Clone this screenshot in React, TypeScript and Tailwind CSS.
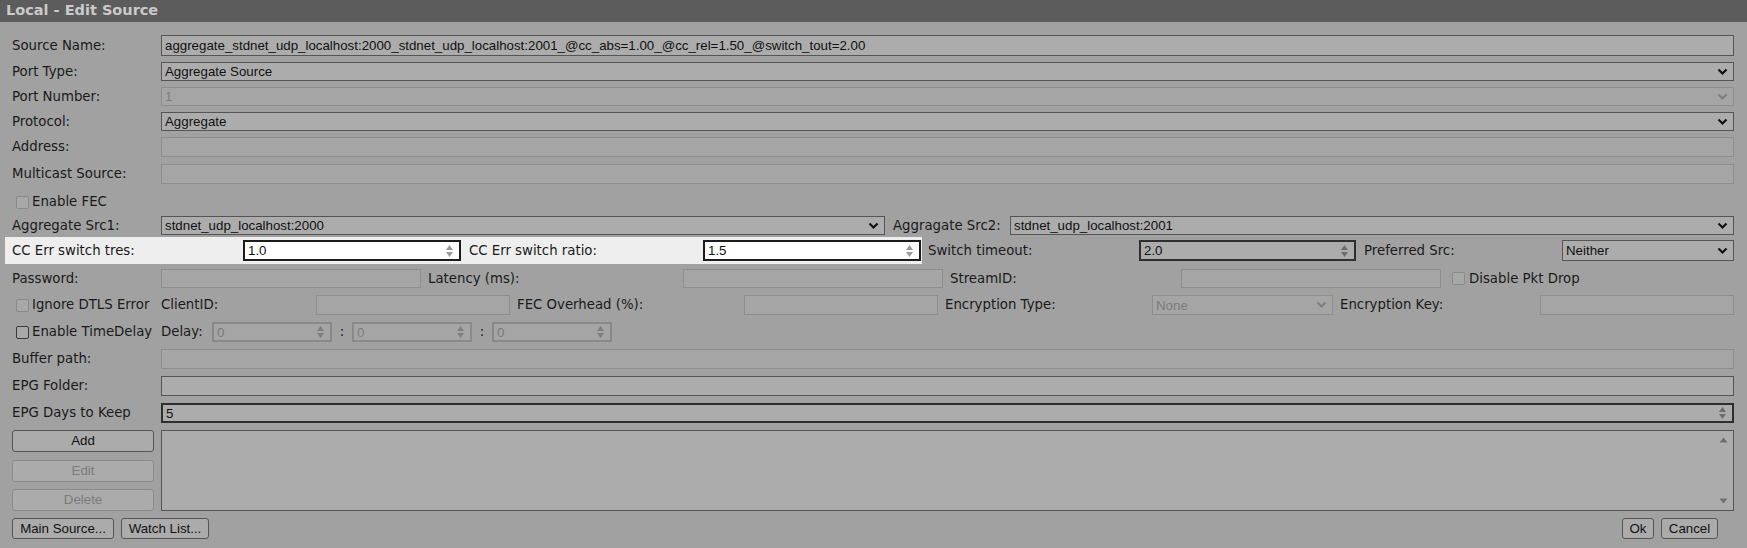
import * as React from "react"

const labelFont = "font-['DejaVu_Sans',Verdana,sans-serif] text-[13.3px] text-[#1a1a1a] whitespace-nowrap"
const fieldFont = "font-['Liberation_Sans',Arial,sans-serif] text-[13.3px]"

type Tone = "normal" | "disabled" | "bright" | "dark" | "dim"

const toneClass: Record<Tone, string> = {
  normal: "border border-[#555555] bg-[#acacac] text-[#111111]",
  disabled: "border border-[#8e8e8e] bg-[#a5a5a5] text-[#7c7c7c]",
  bright: "border-2 border-[#1c1c1c] bg-white text-[#111111]",
  dark: "border-2 border-[#2e2e2e] bg-[#acacac] text-[#111111]",
  dim: "border-2 border-[#8a8a8a] bg-[#a5a5a5] text-[#7c7c7c]",
}

function Spinner({ color }: { color: string }) {
  return (
    <svg width="9" height="16" viewBox="0 0 9 16" className="shrink-0">
      <path d="M1 7 L4.5 2 L8 7 Z" fill={color} />
      <path d="M1 9 L4.5 14 L8 9 Z" fill={color} />
    </svg>
  )
}

function Chevron({ color }: { color: string }) {
  return (
    <svg width="11" height="8" viewBox="0 0 11 8" className="shrink-0">
      <path d="M1.5 1.5 L5.5 5.5 L9.5 1.5" fill="none" stroke={color} strokeWidth="2.2" />
    </svg>
  )
}

function Field({
  value = "",
  tone = "normal",
  kind = "text",
  className = "",
}: {
  value?: string
  tone?: Tone
  kind?: "text" | "select" | "spin"
  className?: string
}) {
  const arrow = tone === "disabled" || tone === "dim" ? "#7f7f7f" : tone === "bright" ? "#9b9b9b" : "#6c6c6c"
  return (
    <div className={`flex h-full items-center pl-[3px] pr-[5px] ${fieldFont} ${toneClass[tone]} ${className}`}>
      <span className="flex-1 truncate leading-[17px]">{value}</span>
      {kind === "select" && <Chevron color={tone === "disabled" ? "#7f7f7f" : "#111111"} />}
      {kind === "spin" && <Spinner color={arrow} />}
    </div>
  )
}

function Check({ dark = false }: { dark?: boolean }) {
  return (
    <span
      className={`inline-block h-[13px] w-[13px] shrink-0 rounded-[2px] border bg-[#a8a8a8] ${
        dark ? "border-[#3a3a3a]" : "border-[#8a8a8a]"
      }`}
    />
  )
}

function Button({ children, disabled = false, className = "" }: { children: React.ReactNode; disabled?: boolean; className?: string }) {
  return (
    <div
      className={`flex items-center justify-center rounded-[3px] border bg-[#ababab] ${fieldFont} ${
        disabled ? "border-[#8c8c8c] text-[#7b7b7b]" : "border-[#555555] text-[#111111]"
      } ${className}`}
    >
      {children}
    </div>
  )
}

export default function App() {
  return (
    <div className="h-[548px] w-[1747px] overflow-hidden bg-[#a1a1a1]">
      {/* title */}
      <div className="flex h-[22px] items-center bg-[#5c5c5c] pl-[6px] font-['DejaVu_Sans',Verdana,sans-serif] text-[14.5px] font-bold text-[#cacaca]">
        Local - Edit Source
      </div>

      <div className="flex flex-col pl-[12px] pr-[13px]">
        <div className="mt-[13px] flex h-[21px] items-center">
          <span className={`w-[149px] ${labelFont}`}>Source Name:</span>
          <Field
            className="flex-1"
            value="aggregate_stdnet_udp_localhost:2000_stdnet_udp_localhost:2001_@cc_abs=1.00_@cc_rel=1.50_@switch_tout=2.00"
          />
        </div>

        <div className="mt-[6px] flex h-[19px] items-center">
          <span className={`w-[149px] ${labelFont}`}>Port Type:</span>
          <Field className="flex-1" kind="select" value="Aggregate Source" />
        </div>

        <div className="mt-[6px] flex h-[19px] items-center">
          <span className={`w-[149px] ${labelFont}`}>Port Number:</span>
          <Field className="flex-1" kind="select" tone="disabled" value="1" />
        </div>

        <div className="mt-[6px] flex h-[19px] items-center">
          <span className={`w-[149px] ${labelFont}`}>Protocol:</span>
          <Field className="flex-1" kind="select" value="Aggregate" />
        </div>

        <div className="mt-[6px] flex h-[20px] items-center">
          <span className={`w-[149px] ${labelFont}`}>Address:</span>
          <Field className="flex-1" tone="disabled" />
        </div>

        <div className="mt-[7px] flex h-[20px] items-center">
          <span className={`w-[149px] ${labelFont}`}>Multicast Source:</span>
          <Field className="flex-1" tone="disabled" />
        </div>

        <div className="mt-[9px] flex h-[18px] items-center pl-[4px]">
          <Check />
          <span className={`ml-[3px] ${labelFont}`}>Enable FEC</span>
        </div>

        <div className="mt-[5px] flex h-[19px] items-center">
          <span className={`w-[149px] ${labelFont}`}>Aggregate Src1:</span>
          <Field className="w-[724px]" kind="select" value="stdnet_udp_localhost:2000" />
          <span className={`ml-[8px] w-[117px] ${labelFont}`}>Aggragate Src2:</span>
          <Field className="flex-1" kind="select" value="stdnet_udp_localhost:2001" />
        </div>

        {/* highlighted CC row */}
        <div className="mt-[2px] flex h-[27px] items-center">
          <div className="-ml-[7px] flex h-full w-[917px] items-center bg-[#eeeeee] pl-[7px]">
            <span className={`w-[231px] ${labelFont}`}>CC Err switch tres:</span>
            <div className="h-[21px] w-[218px]">
              <Field tone="bright" kind="spin" value="1.0" />
            </div>
            <span className={`ml-[8px] w-[234px] ${labelFont}`}>CC Err switch ratio:</span>
            <div className="h-[21px] w-[218px]">
              <Field tone="bright" kind="spin" value="1.5" />
            </div>
          </div>
          <span className={`ml-[6px] w-[211px] ${labelFont}`}>Switch timeout:</span>
          <div className="h-[21px] w-[217px]">
            <Field tone="dark" kind="spin" value="2.0" />
          </div>
          <span className={`ml-[8px] w-[198px] ${labelFont}`}>Preferred Src:</span>
          <div className="h-[21px] flex-1">
            <Field kind="select" value="Neither" />
          </div>
        </div>

        <div className="mt-[5px] flex h-[19px] items-center">
          <span className={`w-[149px] ${labelFont}`}>Password:</span>
          <Field className="w-[260px]" tone="disabled" />
          <span className={`ml-[7px] w-[255px] ${labelFont}`}>Latency (ms):</span>
          <Field className="w-[260px]" tone="disabled" />
          <span className={`ml-[7px] w-[231px] ${labelFont}`}>StreamID:</span>
          <Field className="w-[260px]" tone="disabled" />
          <span className="ml-[11px]">
            <Check />
          </span>
          <span className={`ml-[4px] ${labelFont}`}>Disable Pkt Drop</span>
        </div>

        <div className="mt-[7px] flex h-[20px] items-center">
          <div className="flex w-[149px] items-center pl-[4px]">
            <Check />
            <span className={`ml-[3px] ${labelFont}`}>Ignore DTLS Error</span>
          </div>
          <span className={`w-[155px] ${labelFont}`}>ClientID:</span>
          <Field className="w-[194px]" tone="disabled" />
          <span className={`ml-[7px] w-[227px] ${labelFont}`}>FEC Overhead (%):</span>
          <Field className="w-[194px]" tone="disabled" />
          <span className={`ml-[7px] w-[207px] ${labelFont}`}>Encryption Type:</span>
          <Field className="w-[181px]" tone="disabled" kind="select" value="None" />
          <span className={`ml-[7px] w-[200px] ${labelFont}`}>Encryption Key:</span>
          <Field className="flex-1" tone="disabled" />
        </div>

        <div className="mt-[7px] flex h-[20px] items-center">
          <div className="flex w-[149px] items-center pl-[4px]">
            <Check dark />
            <span className={`ml-[3px] ${labelFont}`}>Enable TimeDelay</span>
          </div>
          <span className={`w-[51px] ${labelFont}`}>Delay:</span>
          <Field className="w-[120px]" tone="dim" kind="spin" value="0" />
          <span className={`w-[20px] text-center ${labelFont}`}>:</span>
          <Field className="w-[120px]" tone="dim" kind="spin" value="0" />
          <span className={`w-[20px] text-center ${labelFont}`}>:</span>
          <Field className="w-[120px]" tone="dim" kind="spin" value="0" />
        </div>

        <div className="mt-[7px] flex h-[20px] items-center">
          <span className={`w-[149px] ${labelFont}`}>Buffer path:</span>
          <Field className="flex-1" tone="disabled" />
        </div>

        <div className="mt-[7px] flex h-[20px] items-center">
          <span className={`w-[149px] ${labelFont}`}>EPG Folder:</span>
          <Field className="flex-1" />
        </div>

        <div className="mt-[7px] flex h-[20px] items-center">
          <span className={`w-[149px] ${labelFont}`}>EPG Days to Keep</span>
          <Field className="flex-1" tone="dark" kind="spin" value="5" />
        </div>

        <div className="mt-[7px] flex h-[81px]">
          <div className="flex w-[149px] flex-col justify-between">
            <Button className="h-[22px] w-[142px]">Add</Button>
            <Button className="h-[22px] w-[142px]" disabled>
              Edit
            </Button>
            <Button className="h-[22px] w-[142px]" disabled>
              Delete
            </Button>
          </div>
          <div className="flex flex-1 flex-col items-end justify-between border border-[#555555] bg-[#acacac] px-[5px] py-[6px]">
            <svg width="9" height="6" viewBox="0 0 9 6">
              <path d="M0.5 5.5 L4.5 0.5 L8.5 5.5 Z" fill="#6e6e6e" />
            </svg>
            <svg width="9" height="6" viewBox="0 0 9 6">
              <path d="M0.5 0.5 L4.5 5.5 L8.5 0.5 Z" fill="#6e6e6e" />
            </svg>
          </div>
        </div>

        <div className="mt-[7px] flex h-[21px] items-center">
          <Button className="h-full w-[102px]">Main Source...</Button>
          <Button className="ml-[7px] h-full w-[88px]">Watch List...</Button>
          <div className="flex-1" />
          <Button className="h-full w-[32px]">Ok</Button>
          <Button className="ml-[7px] mr-[16px] h-full w-[57px]">Cancel</Button>
        </div>
      </div>
    </div>
  )
}
